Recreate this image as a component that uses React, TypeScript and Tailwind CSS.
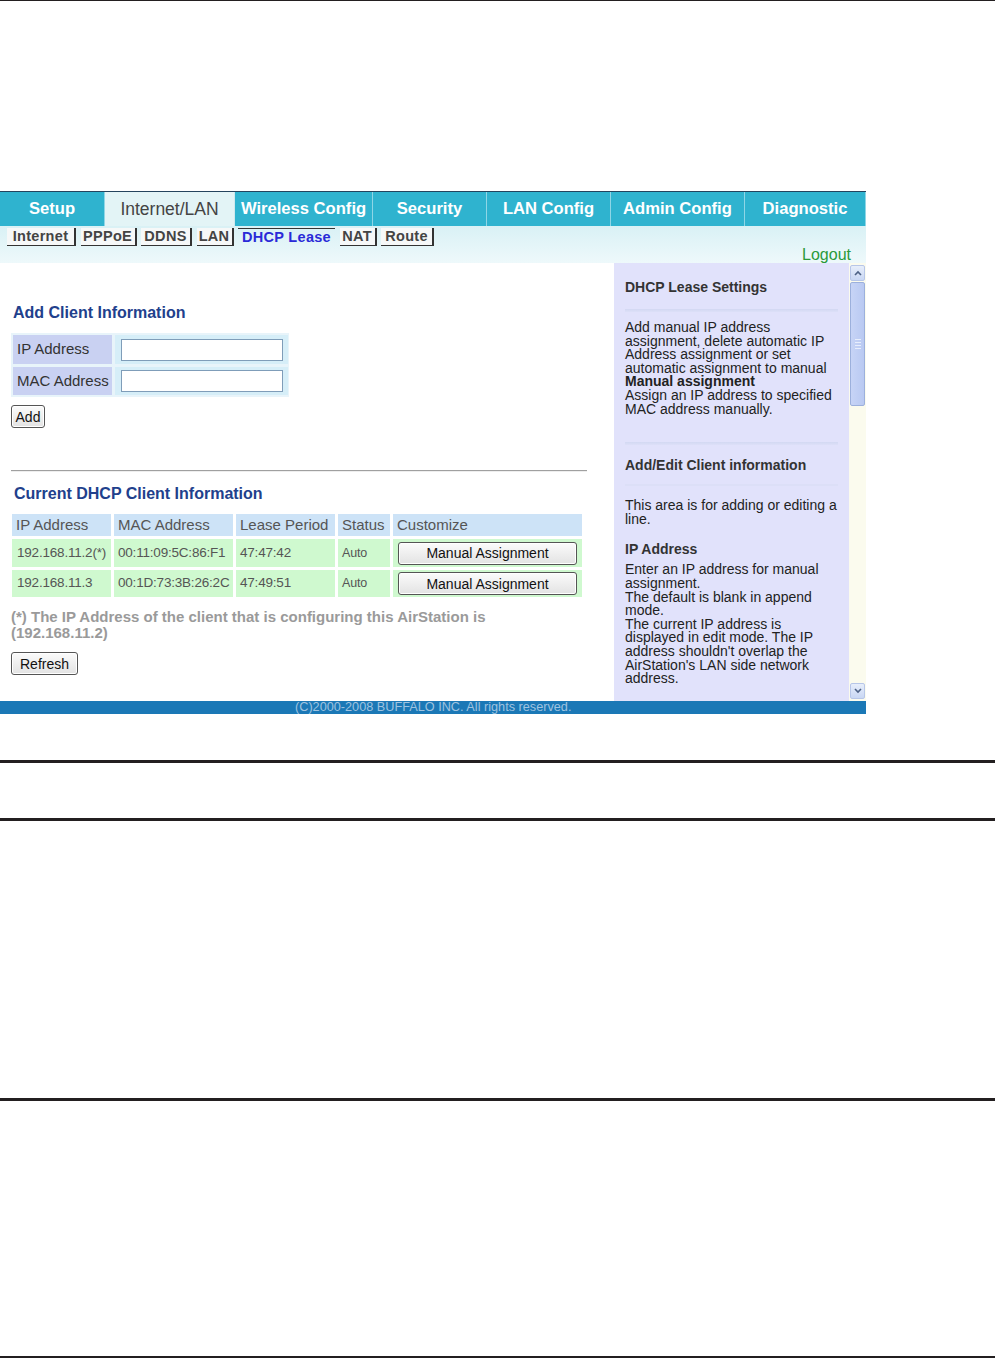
import React from "react";

const tabs = [
  { label: "Setup", w: 105 },
  { label: "Internet/LAN", w: 130, active: true },
  { label: "Wireless Config", w: 138 },
  { label: "Security", w: 114 },
  { label: "LAN Config", w: 124 },
  { label: "Admin Config", w: 134 },
  { label: "Diagnostic", w: 121 },
];

const subtabs = [
  { label: "Internet", w: 69 },
  { label: "PPPoE", w: 56 },
  { label: "DDNS", w: 51 },
  { label: "LAN", w: 37 },
  { label: "DHCP Lease", w: 97, active: true },
  { label: "NAT", w: 37 },
  { label: "Route", w: 53 },
];

function Btn({ children, className = "" }: { children: React.ReactNode; className?: string }) {
  return (
    <button
      className={
        "flex items-center justify-center rounded-[3px] border border-[#555] bg-gradient-to-b from-[#fbfbfb] to-[#e3e3e3] text-[14px] text-[#111] leading-none shadow-[inset_0_0_0_1px_#fff] " +
        className
      }
    >
      {children}
    </button>
  );
}

function Sep({ className = "" }: { className?: string }) {
  return <div className={"h-[3px] w-[213px] bg-gradient-to-b from-[#d2d8f2] to-[#dde0f8] " + className} />;
}

export default function App() {
  return (
    <div className="relative w-[998px] h-[1359px] bg-white font-['Liberation_Sans',Arial,sans-serif] overflow-hidden">
      <div className="h-[1px] w-[995px] bg-[#231f20]" />
      <div className="h-[190px]" />

      {/* screenshot */}
      <div className="w-[866px] h-[523px] flex flex-col">
        {/* main tabs */}
        <div className="flex h-[35px] border-t border-[#24445e]">
          {tabs.map((t) => (
            <div
              key={t.label}
              style={{ width: t.w }}
              className={
                "h-full flex items-center justify-center " +
                (t.active
                  ? "bg-[#e3f4f6] text-[#444] text-[17.5px] border-r border-[#cfe9ee]"
                  : "bg-[#2fb3cf] text-white text-[16.6px] font-bold border-r border-[#8fd6e6]")
              }
            >
              {t.label}
            </div>
          ))}
        </div>

        {/* sub tabs */}
        <div className="relative h-[37px] bg-gradient-to-b from-[#d9f1f5] to-[#eef9fb]">
          <div className="flex items-start gap-[4.5px] pl-[7px] pt-[2px]">
            {subtabs.map((s) =>
              s.active ? (
                <div
                  key={s.label}
                  style={{ width: s.w }}
                  className="h-[18px] flex justify-center border-t border-[#333] text-[14.5px] font-bold tracking-[0.3px] text-[#2a2ad8] leading-[17px] whitespace-nowrap"
                >
                  {s.label}
                </div>
              ) : (
                <div
                  key={s.label}
                  style={{ width: s.w }}
                  className="h-[18px] flex justify-center bg-[#f6f8f8] border-r-2 border-b border-[#333] text-[14.5px] font-bold tracking-[0.3px] text-[#444] leading-[17px] whitespace-nowrap"
                >
                  {s.label}
                </div>
              )
            )}
          </div>
          <div className="absolute right-[15px] top-[17px] text-[16px] text-[#2a9a3a]">Logout</div>
        </div>

        {/* body */}
        <div className="flex h-[438px]">
          {/* left */}
          <div className="w-[614px] bg-white pl-[11px] pt-[40px]">
            <div className="pl-[2px] text-[16px] font-bold text-[#21408c] leading-[20px]">Add Client Information</div>
            <div className="mt-[10px] w-[278px] bg-[#e8f4fa] p-[2px] grid grid-cols-[99px_173px] gap-[3px]">
              <div className="h-[29px] bg-[#c9d1f2] flex items-center pl-[4px] text-[15px] text-[#333]">IP Address</div>
              <div className="h-[29px] bg-[#d6eef8] flex items-center pl-[6px]">
                <div className="w-[162px] h-[22px] bg-white border border-[#7f9db9]" />
              </div>
              <div className="h-[28px] bg-[#c9d1f2] flex items-center pl-[4px] text-[15px] text-[#333]">MAC Address</div>
              <div className="h-[28px] bg-[#d6eef8] flex items-center pl-[6px]">
                <div className="w-[162px] h-[22px] bg-white border border-[#7f9db9]" />
              </div>
            </div>
            <Btn className="mt-[8px] w-[34px] h-[23px]">Add</Btn>

            <div className="mt-[42px] w-[576px] h-[2px] border-t border-[#a0a0a0] border-b border-b-[#eeeeee]" />

            <div className="mt-[12px] pl-[3px] text-[16px] font-bold text-[#21408c] leading-[20px]">Current DHCP Client Information</div>

            <div className="mt-[10px] w-[572px] flex flex-col gap-[3px] pl-[1px]">
              <div className="flex gap-[3px] h-[22px] text-[15px] text-[#555]">
                <div className="w-[99px] bg-[#cde3f7] flex items-center pl-[4px]">IP Address</div>
                <div className="w-[119px] bg-[#cde3f7] flex items-center pl-[4px]">MAC Address</div>
                <div className="w-[99px] bg-[#cde3f7] flex items-center pl-[4px]">Lease Period</div>
                <div className="w-[52px] bg-[#cde3f7] flex items-center pl-[4px]">Status</div>
                <div className="w-[189px] bg-[#cde3f7] flex items-center pl-[4px]">Customize</div>
              </div>
              {[
                ["192.168.11.2(*)", "00:11:09:5C:86:F1", "47:47:42", "h-[28px]"],
                ["192.168.11.3", "00:1D:73:3B:26:2C", "47:49:51", "h-[27px]"],
              ].map((r) => (
                <div key={r[0]} className={"flex gap-[3px] text-[13.5px] text-[#555] tracking-[-0.2px] " + r[3]}>
                  <div className="w-[99px] bg-[#cff9cf] flex items-center pl-[5px]">{r[0]}</div>
                  <div className="w-[119px] bg-[#cff9cf] flex items-center pl-[4px]">{r[1]}</div>
                  <div className="w-[99px] bg-[#cff9cf] flex items-center pl-[4px]">{r[2]}</div>
                  <div className="w-[52px] bg-[#cff9cf] flex items-center pl-[4px] text-[12.5px]">Auto</div>
                  <div className="w-[189px] bg-[#cff9cf] flex items-center pl-[5px]">
                    <Btn className="w-[179px] h-[23px] tracking-normal">Manual Assignment</Btn>
                  </div>
                </div>
              ))}
            </div>

            <div className="mt-[12px] text-[15px] font-bold text-[#9a9a9a] leading-[16px] w-[560px]">
              (*) The IP Address of the client that is configuring this AirStation is
              <br />
              (192.168.11.2)
            </div>
            <Btn className="mt-[11px] w-[67px] h-[23px]">Refresh</Btn>
          </div>

          {/* right help panel */}
          <div className="w-[235px] bg-[#e1e2fb] pl-[11px] pt-[15px] text-[14px] text-[#222] leading-[13.6px]">
            <div className="font-bold text-[#333] leading-[18px]">DHCP Lease Settings</div>
            <Sep className="mt-[13px]" />
            <div className="mt-[9px] w-[213px]">
              Add manual IP address assignment, delete automatic IP Address assignment or set automatic assignment to manual
              <div className="font-bold">Manual assignment</div>
              Assign an IP address to specified MAC address manually.
            </div>
            <Sep className="mt-[26px]" />
            <div className="mt-[11px] font-bold text-[#333] leading-[18px]">Add/Edit Client information</div>
            <div className="mt-[10px] h-[2px] w-[213px] bg-[#dcdff7]" />
            <div className="mt-[13px] w-[213px]">This area is for adding or editing a line.</div>
            <div className="mt-[14px] font-bold text-[#333] leading-[18px]">IP Address</div>
            <div className="mt-[5px] w-[213px]">
              Enter an IP address for manual assignment.
              <br />
              The default is blank in append mode.
              <br />
              The current IP address is displayed in edit mode. The IP address shouldn't overlap the AirStation's LAN side
              network address.
            </div>
          </div>

          {/* scrollbar */}
          <div className="w-[17px] bg-[#fbfbee] flex flex-col pt-[2px] pb-[2px] px-[1px]">
            <div className="h-[16px] rounded-[2px] border border-[#b7c6e8] bg-gradient-to-b from-[#e7eefb] to-[#c9d7f4] flex items-center justify-center">
              <svg width="8" height="6" viewBox="0 0 8 6">
                <path d="M1 5 L4 2 L7 5" stroke="#4d6185" strokeWidth="1.6" fill="none" />
              </svg>
            </div>
            <div className="mt-[1px] h-[124px] rounded-[2px] border border-[#9cb0dc] bg-gradient-to-r from-[#c7d4f6] to-[#b9c9f2] flex items-center justify-center">
              <div className="flex flex-col gap-[2px]">
                <div className="w-[6px] h-[1px] bg-[#e8eefc]" />
                <div className="w-[6px] h-[1px] bg-[#e8eefc]" />
                <div className="w-[6px] h-[1px] bg-[#e8eefc]" />
                <div className="w-[6px] h-[1px] bg-[#e8eefc]" />
              </div>
            </div>
            <div className="flex-1" />
            <div className="h-[16px] rounded-[2px] border border-[#b7c6e8] bg-gradient-to-b from-[#e7eefb] to-[#c9d7f4] flex items-center justify-center">
              <svg width="8" height="6" viewBox="0 0 8 6">
                <path d="M1 1 L4 4 L7 1" stroke="#4d6185" strokeWidth="1.6" fill="none" />
              </svg>
            </div>
          </div>
        </div>

        {/* footer */}
        <div className="h-[13px] bg-[#1b78b6] flex items-center pl-[295px] text-[12.7px] text-[#9fc3e0] leading-none">
          (C)2000-2008 BUFFALO INC. All rights reserved.
        </div>
      </div>

      <div className="h-[46px]" />
      <div className="h-[3px] w-[995px] bg-[#231f20]" />
      <div className="h-[55px]" />
      <div className="h-[3px] w-[995px] bg-[#231f20]" />
      <div className="h-[277px]" />
      <div className="h-[3px] w-[995px] bg-[#231f20]" />
      <div className="h-[255px]" />
      <div className="h-[2px] w-[995px] bg-[#231f20]" />
    </div>
  );
}
